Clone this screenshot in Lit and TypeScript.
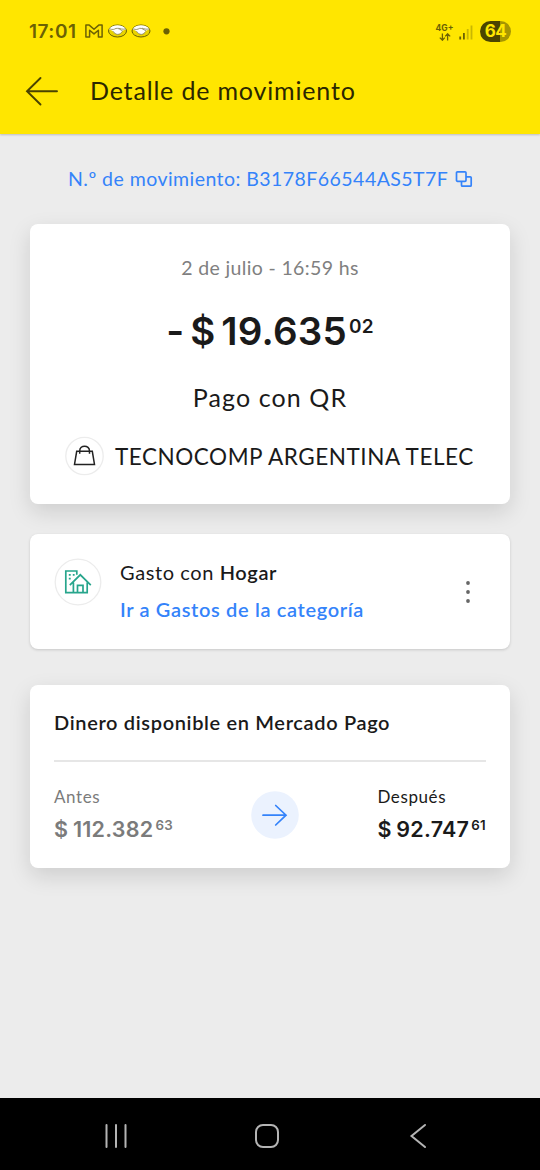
import { LitElement, html, css, svg } from "lit";
import { customElement, property } from "lit/decorators.js";

@customElement("status-bar")
class StatusBar extends LitElement {
  static styles = css`
    :host { display: flex; align-items: center; height: 62px; padding: 0 29px 0 29px; color: #6b6104; box-sizing: border-box; }
    .time { font: 600 19px/24px Inter, sans-serif; letter-spacing: .5px; width: 56px; white-space: nowrap; padding-top: 1px; }
    .notes { display: block; }
    .right { margin-left: auto; display: flex; align-items: center; }
    .net { font: 700 8.5px/9px Inter, sans-serif; width: 17px; display: flex; flex-direction: column; align-items: center; color: #6b6104; padding-top: 2px; }
    .net svg { display: block; }
    .signal { margin: 2px 7px 0 6px; display: block; }
    .battery { width: 31px; height: 21px; border-radius: 11px; color: #ffe600; text-align: center;
      background: linear-gradient(90deg, #4b4400 0 64%, #a69601 64%); font: 700 17px/21px Inter, sans-serif; letter-spacing: -0.5px; }
  `;
  render() {
    const shake = (x: number) => svg`
      <g transform="translate(${x} 0)">
        <ellipse cx="9.5" cy="9" rx="9" ry="6" fill="#e9d300" stroke="#6b6104" stroke-width="1"/>
        <path d="M1 7.2C4 2 15 2 18 7.2L14.4 8.8L12.6 11.6L9.6 12.6L6.8 11.4L4.3 8.8Z" fill="#fff"/>
        <path d="M1.6 6.8C4.6 8 6.2 7.4 8 6.4C10 5.6 13 8.2 14.6 9M17.6 6.8C15 7.8 12 6.6 10.6 6.2M5 9.2C6 11 8 12.4 9.8 12.4C12 12.4 13.4 10.6 14.2 9.6" fill="none" stroke="#817b50" stroke-width=".8"/>
      </g>`;
    return html`
      <div class="time">17:01</div>
      <svg class="notes" width="90" height="18" viewBox="0 0 90 18">
        <path d="M.9 15V3.1H4.2L9 7.3L13.8 3.1H17.1V15H13.4V8.2L9 11.9L4.6 8.2V15Z" fill="none" stroke="#6b6104" stroke-width="1.5" stroke-linejoin="round"/>
        ${shake(23)}${shake(46.5)}
        <circle cx="81.5" cy="9.3" r="3.1" fill="#6b6104"/>
      </svg>
      <div class="right">
        <div class="net"><span>4G+</span>
          <svg width="12" height="8" viewBox="0 0 12 8"><path d="M3.4 .4V7M.8 4.6L3.4 7.2L5.8 4.6M8.6 7.6V1M6.2 3.4L8.6 .8L11.2 3.4" fill="none" stroke="#6b6104" stroke-width="1.3"/></svg>
        </div>
        <svg class="signal" width="14" height="15" viewBox="0 0 14 15">
          <path d="M1.2 11.5V14.5M4.9 8V14.5" stroke="#6b6104" stroke-width="1.8"/>
          <path d="M8.7 4V14.5M12.5 .5V14.5" stroke="#c9b702" stroke-width="1.8"/>
        </svg>
        <div class="battery">64</div>
      </div>`;
  }
}

@customElement("money-amount")
class MoneyAmount extends LitElement {
  @property() whole = "";
  @property() cents = "";
  static styles = css`
    :host { display: flex; align-items: flex-start; white-space: nowrap; font-family: Inter, sans-serif; font-weight: 600; }
    .cents { font-size: var(--cents-size); line-height: var(--cents-line); margin-left: var(--cents-gap); letter-spacing: .3px; }
  `;
  render() {
    return html`<span>${this.whole}</span><span class="cents">${this.cents}</span>`;
  }
}

@customElement("app-root")
class AppRoot extends LitElement {
  static styles = css`
    :host { display: flex; flex-direction: column; height: 1170px; background: #ececec; color: #1a1a1a;
      font-family: Lato, sans-serif; white-space: nowrap; overflow: hidden; }
    * { box-sizing: border-box; }
    svg { display: block; flex: none; }
    header { height: 134px; background: #ffe600; box-shadow: 0 1px 2px rgba(0,0,0,.2); flex: none; }
    .bar { display: flex; align-items: center; height: 58px; padding-left: 25px; }
    .title { margin: -2px 0 0 31px; font-size: 25px; line-height: 30px; letter-spacing: .83px; color: #2b2700; }
    main { flex: 1; padding: 0 30px; display: flex; flex-direction: column; }
    .ref { height: 90px; display: flex; align-items: center; padding-left: 38px; gap: 7px; color: #3483fa; font-size: 19.5px; letter-spacing: .45px; }
    .code { margin-top: -1px; }
    .card { background: #fff; border-radius: 8px; }
    .payment { height: 280px; display: flex; flex-direction: column; align-items: center; box-shadow: 0 8px 22px rgba(0,0,0,.13); }
    .date { margin-top: 32px; font-size: 19.5px; line-height: 24px; color: #808080; letter-spacing: .35px; }
    .total { margin-top: 28px; height: 46px; font-size: 38.5px; line-height: 46px; letter-spacing: .2px; word-spacing: -4px; --cents-size: 19px; --cents-line: 38px; --cents-gap: 2px; }
    .kind { margin-top: 28px; font-size: 25px; line-height: 30px; letter-spacing: 1.1px; }
    .shop { align-self: stretch; margin: 24px 0 0 35px; height: 40px; display: flex; align-items: center; gap: 10px; font-size: 22.5px; letter-spacing: .54px; }
    .category { margin-top: 30px; height: 115px; display: flex; padding: 24px 40px 0 24px; box-shadow: 0 1px 3px rgba(0,0,0,.16); }
    .lines { margin-left: 18px; flex: 1; }
    .spent { font-size: 20px; line-height: 30px; letter-spacing: .6px; margin-top: -1px; }
    .spent b { font-weight: 600; }
    .link { margin-top: 7px; font-size: 20px; line-height: 30px; font-weight: 600; letter-spacing: .65px; color: #3483fa; }
    .dots { margin-top: 21px; }
    .balance { margin-top: 36px; height: 183px; padding: 0 24px; box-shadow: 0 8px 22px rgba(0,0,0,.13); }
    .heading { height: 77px; display: flex; align-items: center; padding-bottom: 1px; font-size: 20px; font-weight: 600; letter-spacing: .65px; border-bottom: 2px solid #e6e6e6; }
    .compare { display: flex; justify-content: space-between; padding-top: 24px; }
    .side { height: 60px; }
    .label { font-size: 17px; line-height: 22px; letter-spacing: .6px; }
    .sum { margin-top: 7px; font-size: 21.5px; line-height: 28px; letter-spacing: .25px; word-spacing: -1px; --cents-size: 13.3px; --cents-line: 21px; --cents-gap: 2px; }
    .before { color: #7b7b7b; }
    .go { margin: 5px 0 0; }
    nav { height: 72px; background: #000; flex: none; display: flex; justify-content: space-between; align-items: center; padding: 4px 113px 0 104px; }
    .home { margin-right: 4px; }
  `;
  render() {
    return html`
      <header>
        <status-bar></status-bar>
        <div class="bar">
          <svg width="34" height="30" viewBox="0 0 34 30"><path d="M15.5 2L2 15.3L15.5 28.5M2 15.3H32" fill="none" stroke="#4a4300" stroke-width="1.9" stroke-linecap="round"/></svg>
          <div class="title">Detalle de movimiento</div>
        </div>
      </header>
      <main>
        <div class="ref">
          <span class="code">N.º de movimiento: B3178F66544AS5T7F</span>
          <svg width="18" height="18" viewBox="0 0 18 18" fill="none" stroke="#3483fa" stroke-width="1.7"><rect x="1.5" y="1.8" width="9.5" height="9.5" rx="1"/><path d="M11 6.8H15.2Q16.2 6.8 16.2 7.8V15.2Q16.2 16.2 15.2 16.2H7.5Q6.5 16.2 6.5 15.2V11.3"/></svg>
        </div>
        <section class="card payment">
          <div class="date">2 de julio - 16:59 hs</div>
          <money-amount class="total" whole="- $ 19.635" cents="02"></money-amount>
          <div class="kind">Pago con QR</div>
          <div class="shop">
            <svg width="40" height="40" viewBox="0 0 40 40" fill="none">
              <circle cx="19.5" cy="20" r="18.7" stroke="#ececec" stroke-width="1.3"/>
              <path d="M11.7 15.3H27.3L29.5 28.4H9.5ZM14.7 17.8V15C14.7 8.6 24.5 8.6 24.5 15V17.8" stroke="#222" stroke-width="1.5"/>
            </svg>
            <span>TECNOCOMP ARGENTINA TELEC</span>
          </div>
        </section>
        <section class="card category">
          <svg width="48" height="48" viewBox="0 0 48 48" fill="none">
            <circle cx="24" cy="24" r="22.8" stroke="#ececec" stroke-width="1.3"/>
            <g stroke="#27a58c" stroke-width="1.7">
              <path d="M22.8 16.8V13H11.8V34.6H33.2V24.5M15.8 27.2L26.3 16.8L36.8 27.2M19.4 24.5V34.6"/>
              <path d="M23.5 34.6V27.4H29V34.6"/>
              <path d="M14.8 16.9H16.7M18.8 16.9H20.6M14.8 20.6H16.7" stroke-width="1.6"/>
            </g>
          </svg>
          <div class="lines">
            <div class="spent">Gasto con <b>Hogar</b></div>
            <div class="link">Ir a Gastos de la categoría</div>
          </div>
          <svg class="dots" width="4" height="26" viewBox="0 0 4 26" fill="#666"><circle cx="2" cy="4" r="1.9"/><circle cx="2" cy="13" r="1.9"/><circle cx="2" cy="22" r="1.9"/></svg>
        </section>
        <section class="card balance">
          <div class="heading">Dinero disponible en Mercado Pago</div>
          <div class="compare">
            <div class="side before">
              <div class="label">Antes</div>
              <money-amount class="sum" whole="$ 112.382" cents="63"></money-amount>
            </div>
            <svg class="go" width="48" height="48" viewBox="0 0 48 48"><circle cx="24" cy="24" r="23.8" fill="#ebf2fe"/><path d="M12 24.2H35M24.7 14.5L35 24.2L24.7 34" fill="none" stroke="#3483fa" stroke-width="1.7" stroke-linecap="round"/></svg>
            <div class="side">
              <div class="label">Después</div>
              <money-amount class="sum" whole="$ 92.747" cents="61"></money-amount>
            </div>
          </div>
        </section>
      </main>
      <nav>
        <svg width="24" height="24" viewBox="0 0 24 24"><path d="M2.5 1V23M12 1V23M21.5 1V23" stroke="#b4b4b4" stroke-width="2" stroke-linecap="round"/></svg>
        <svg class="home" width="26" height="26" viewBox="0 0 26 26"><rect x="2" y="2" width="22" height="22" rx="7" fill="none" stroke="#b4b4b4" stroke-width="2"/></svg>
        <svg width="18" height="26" viewBox="0 0 18 26"><path d="M16 2L2.5 13L16 24" fill="none" stroke="#b4b4b4" stroke-width="2" stroke-linecap="round"/></svg>
      </nav>`;
  }
}
